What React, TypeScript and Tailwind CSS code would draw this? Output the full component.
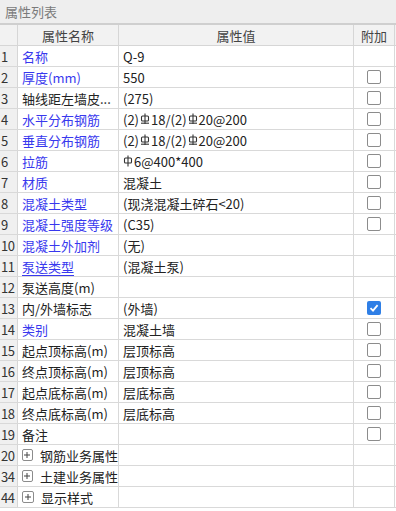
import React from "react";

type Row = {
  no: number;
  name: string;
  value?: React.ReactNode;
  blue?: boolean;
  link?: boolean;
  check?: "off" | "on";
  group?: boolean;
};

// HRB400 钢筋符号
function Hrb() {
  return (
    <svg width="10" height="12" viewBox="0 0 10 12" className="inline-block mx-[1px] -mt-[3px]">
      <rect x="1.5" y="3" width="7" height="5" rx="1" fill="none" stroke="#333" strokeWidth="1.1" />
      <line x1="5" y1="0.5" x2="5" y2="11" stroke="#333" strokeWidth="1.1" />
      <line x1="1" y1="10.2" x2="9" y2="10.2" stroke="#333" strokeWidth="1.1" />
    </svg>
  );
}

// HPB300 钢筋符号
function Hpb() {
  return (
    <svg width="10" height="12" viewBox="0 0 10 12" className="inline-block mr-[1px] -mt-[3px]">
      <rect x="1.5" y="3" width="7" height="5" rx="1" fill="none" stroke="#333" strokeWidth="1.1" />
      <line x1="5" y1="0.5" x2="5" y2="11.5" stroke="#333" strokeWidth="1.1" />
    </svg>
  );
}

const rebar = (
  <span>
    (2)
    <Hrb />
    18/(2)
    <Hrb />
    20@200
  </span>
);

const rows: Row[] = [
  { no: 1, name: "名称", value: "Q-9", blue: true },
  { no: 2, name: "厚度(mm)", value: "550", blue: true, check: "off" },
  { no: 3, name: "轴线距左墙皮...", value: "(275)", check: "off" },
  { no: 4, name: "水平分布钢筋", value: rebar, blue: true, check: "off" },
  { no: 5, name: "垂直分布钢筋", value: rebar, blue: true, check: "off" },
  {
    no: 6,
    name: "拉筋",
    value: (
      <span>
        <Hpb />
        6@400*400
      </span>
    ),
    blue: true,
    check: "off",
  },
  { no: 7, name: "材质", value: "混凝土", blue: true, check: "off" },
  { no: 8, name: "混凝土类型", value: "(现浇混凝土碎石<20)", blue: true, check: "off" },
  { no: 9, name: "混凝土强度等级", value: "(C35)", blue: true, check: "off" },
  { no: 10, name: "混凝土外加剂", value: "(无)", blue: true },
  { no: 11, name: "泵送类型", value: "(混凝土泵)", blue: true, link: true },
  { no: 12, name: "泵送高度(m)" },
  { no: 13, name: "内/外墙标志", value: "(外墙)", check: "on" },
  { no: 14, name: "类别", value: "混凝土墙", blue: true, check: "off" },
  { no: 15, name: "起点顶标高(m)", value: "层顶标高", check: "off" },
  { no: 16, name: "终点顶标高(m)", value: "层顶标高", check: "off" },
  { no: 17, name: "起点底标高(m)", value: "层底标高", check: "off" },
  { no: 18, name: "终点底标高(m)", value: "层底标高", check: "off" },
  { no: 19, name: "备注", check: "off" },
  { no: 20, name: "钢筋业务属性", group: true },
  { no: 34, name: "土建业务属性", group: true },
  { no: 44, name: "显示样式", group: true },
];

function CheckBox({ on }: { on: boolean }) {
  if (on) {
    return (
      <div className="w-[14px] h-[14px] rounded-[2px] bg-[#2f7fe6] flex items-center justify-center">
        <svg width="10" height="10" viewBox="0 0 10 10">
          <path d="M1.5 5.2 L4 7.6 L8.6 2.2" fill="none" stroke="#fff" strokeWidth="1.8" />
        </svg>
      </div>
    );
  }
  return <div className="w-[14px] h-[14px] rounded-[2px] border border-[#8c8c8c] bg-white" />;
}

function PlusBox() {
  return (
    <div className="w-[12px] h-[12px] rounded-[2px] border border-[#8c8c8c] flex items-center justify-center mr-[7px]">
      <svg width="8" height="8" viewBox="0 0 8 8">
        <line x1="4" y1="1" x2="4" y2="7" stroke="#444" strokeWidth="1" />
        <line x1="1" y1="4" x2="7" y2="4" stroke="#444" strokeWidth="1" />
      </svg>
    </div>
  );
}

export default function App() {
  const cols = "grid grid-cols-[18px_101px_235px_41px]";
  return (
    <div
      className="w-[396px] h-[511px] bg-white text-[13px] text-[#222] leading-none"
      style={{ fontFamily: '"Microsoft YaHei", "Noto Sans CJK SC", sans-serif' }}
    >
      <div className="h-[25px] bg-[#eeeeee] border-b-2 border-[#cfcfcf] flex items-center pl-[5px] text-[#7a7a7a]">
        属性列表
      </div>
      <div className={`${cols} h-[21px] bg-[#f2f2f2] border-b border-[#d6d6d6]`}>
        <div className="border-r border-[#d6d6d6]" />
        <div className="border-r border-[#d6d6d6] flex items-center justify-center text-[#444]">属性名称</div>
        <div className="border-r border-[#d6d6d6] flex items-center justify-center text-[#444]">属性值</div>
        <div className="border-r border-[#d6d6d6] flex items-center justify-center text-[#444]">附加</div>
      </div>
      {rows.map((r) => (
        <div key={r.no} className={`${cols} h-[21px] border-b border-[#d9d9d9]`}>
          <div className="bg-[#f0f0f0] border-r border-[#d6d6d6] flex items-center pl-[1px] text-[#333] tracking-[-0.5px]">
            {r.no}
          </div>
          <div
            className={`border-r border-[#d9d9d9] flex items-center pl-[4px] whitespace-nowrap overflow-hidden ${
              r.blue ? "text-[#3838ee]" : "text-[#222]"
            }`}
          >
            {r.group && <PlusBox />}
            <span className={r.link ? "underline underline-offset-[3px]" : ""}>{r.name}</span>
          </div>
          <div className="border-r border-[#d9d9d9] flex items-center pl-[4px] whitespace-nowrap">{r.value}</div>
          <div className="border-r border-[#d9d9d9] flex items-center justify-center">
            {r.check && <CheckBox on={r.check === "on"} />}
          </div>
        </div>
      ))}
    </div>
  );
}
